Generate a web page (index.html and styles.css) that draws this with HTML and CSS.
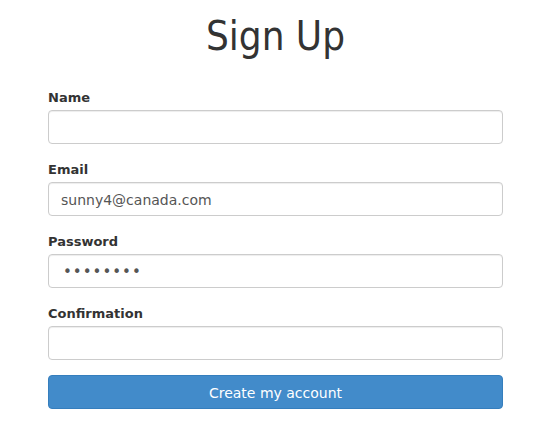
FILE: index.html
```html
<!DOCTYPE html>
<html>
<head>
<meta charset="utf-8">
<link rel="stylesheet" href="styles.css">
</head>
<body>
<div class="page">
  <h1 class="title">Sign Up</h1>
  <form class="form">
    <div class="group">
      <label class="label">Name</label>
      <input class="control" type="text" value="">
    </div>
    <div class="group">
      <label class="label">Email</label>
      <input class="control" type="email" value="sunny4@canada.com">
    </div>
    <div class="group">
      <label class="label">Password</label>
      <input class="control control-secret" type="password" value="password">
    </div>
    <div class="group">
      <label class="label">Confirmation</label>
      <input class="control control-secret" type="password" value="">
    </div>
    <button class="btn" type="button">Create my account</button>
  </form>
</div>
</body>
</html>
```
FILE: styles.css
```css
* { box-sizing: border-box; }
html, body { margin: 0; padding: 0; background: #fff; }
body {
  font-family: "DejaVu Sans", Verdana, sans-serif;
  color: #333;
  font-size: 14px;
  line-height: 1.42857;
}
.page {
  padding: 0 52px 0 48px;
}
.title {
  margin: 14px 0 0;
  font-size: 40px;
  font-stretch: condensed;
  font-weight: normal;
  line-height: 1.1;
  text-align: center;
  color: #333;
  height: 73px;
}
.form { display: flex; flex-direction: column; }
.group { display: flex; flex-direction: column; margin-bottom: 15px; }
.label {
  font-weight: bold;
  font-size: 13px;
  line-height: 18px;
  padding-top: 2px;
  margin-bottom: 3px;
}
.control {
  height: 34px;
  padding: 7px 12px 5px;
  font: inherit;
  font-size: 14px;
  color: #555;
  border: 1px solid #ccc;
  border-radius: 4px;
  box-shadow: inset 0 1px 1px rgba(0,0,0,.075);
  background: #fff;
}
.control-secret {
  padding-left: 14px;
  letter-spacing: 1px;
  font-size: 15px;
}
.btn {
  height: 34px;
  font: inherit;
  font-size: 14px;
  color: #fff;
  background: #428bca;
  border: 1px solid #357ebd;
  border-radius: 4px;
  padding: 8px 12px 4px;
}
```
